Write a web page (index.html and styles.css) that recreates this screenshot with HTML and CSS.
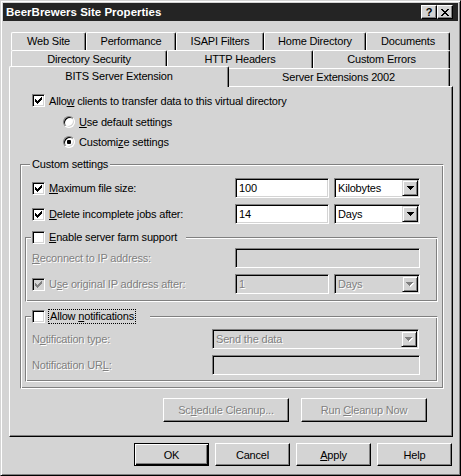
FILE: index.html
```html
<!DOCTYPE html>
<html>
<head>
<meta charset="utf-8">
<title>BeerBrewers Site Properties</title>
<link rel="stylesheet" href="styles.css">
</head>
<body>
<div class="window">
  <div class="titlebar">
    <span class="title">BeerBrewers Site Properties</span>
    <span class="cap cap-help">?</span>
    <span class="cap cap-close"><svg width="8" height="7" viewBox="0 0 8 7"><path d="M0 0h2v1h-2z M6 0h2v1h-2z M1 1h2v1h-2z M5 1h2v1h-2z M2 2h4v1h-4z M3 3h2v1h-2z M2 4h4v1h-4z M1 5h2v1h-2z M5 5h2v1h-2z M0 6h2v1h-2z M6 6h2v1h-2z" fill="#000"/></svg></span>
  </div>
  <div class="body">
    <div class="tabs">
      <div class="tab-row">
        <div class="tab t-web">Web Site</div>
        <div class="tab t-perf">Performance</div>
        <div class="tab t-isapi">ISAPI Filters</div>
        <div class="tab t-home">Home Directory</div>
        <div class="tab t-docs">Documents</div>
      </div>
      <div class="tab-row">
        <div class="tab t-dirsec">Directory Security</div>
        <div class="tab t-http">HTTP Headers</div>
        <div class="tab t-errors">Custom Errors</div>
      </div>
      <div class="tab-row row3">
        <div class="tab sel t-bits">BITS Server Extension</div>
        <div class="tab t-ext">Server Extensions 2002</div>
      </div>
    </div>
    <div class="panel">
      <div class="row r-allow">
        <span class="cb"><svg class="ck" width="7" height="7" viewBox="0 0 7 7"><path d="M6 0h1v1h-1z M5 1h2v1h-2z M0 2h1v1h-1z M4 2h3v1h-3z M0 3h2v1h-2z M3 3h3v1h-3z M0 4h5v1h-5z M1 5h3v1h-3z M2 6h1v1h-1z"/></svg></span>
        <span class="lbl">Allo<u>w</u> clients to transfer data to this virtual directory</span>
      </div>
      <div class="row r-radio1">
        <span class="rb"></span>
        <span class="lbl rlbl"><u>U</u>se default settings</span>
      </div>
      <div class="row r-radio2">
        <span class="rb on"></span>
        <span class="lbl rlbl">Customi<u>z</u>e settings</span>
      </div>

      <fieldset class="group g-custom">
        <legend class="lg lg-custom">Custom settings</legend>
        <div class="frow r-max">
          <div class="col col-wide">
            <span class="cb"><svg class="ck" width="7" height="7" viewBox="0 0 7 7"><path d="M6 0h1v1h-1z M5 1h2v1h-2z M0 2h1v1h-1z M4 2h3v1h-3z M0 3h2v1h-2z M3 3h3v1h-3z M0 4h5v1h-5z M1 5h3v1h-3z M2 6h1v1h-1z"/></svg></span>
            <span class="lbl"><u>M</u>aximum file size:</span>
          </div>
          <div class="edit e-short">100</div>
          <div class="combo c-unit"><span class="cval">Kilobytes</span><span class="cbtn"><svg width="7" height="4" viewBox="0 0 7 4"><path d="M0 0h7v1h-1v1h-1v1h-1v1h-1v-1h-1v-1h-1v-1h-1z" fill="#000"/></svg></span></div>
        </div>
        <div class="frow r-del">
          <div class="col col-wide">
            <span class="cb"><svg class="ck" width="7" height="7" viewBox="0 0 7 7"><path d="M6 0h1v1h-1z M5 1h2v1h-2z M0 2h1v1h-1z M4 2h3v1h-3z M0 3h2v1h-2z M3 3h3v1h-3z M0 4h5v1h-5z M1 5h3v1h-3z M2 6h1v1h-1z"/></svg></span>
            <span class="lbl"><u>D</u>elete incomplete jobs after:</span>
          </div>
          <div class="edit e-short">14</div>
          <div class="combo c-unit"><span class="cval">Days</span><span class="cbtn"><svg width="7" height="4" viewBox="0 0 7 4"><path d="M0 0h7v1h-1v1h-1v1h-1v1h-1v-1h-1v-1h-1v-1h-1z" fill="#000"/></svg></span></div>
        </div>

        <fieldset class="group g-farm">
          <legend class="lg lg-farm"><span class="cb empty"></span><span class="lbl"><u>E</u>nable server farm support</span></legend>
          <div class="frow r-recon">
            <div class="col col-wide"><span class="dis"><u>R</u>econnect to IP address:</span></div>
            <div class="edit e-long disabled"></div>
          </div>
          <div class="frow r-orig">
            <div class="col col-wide">
              <span class="cb disabled"><svg class="ck" width="7" height="7" viewBox="0 0 7 7"><path d="M6 0h1v1h-1z M5 1h2v1h-2z M0 2h1v1h-1z M4 2h3v1h-3z M0 3h2v1h-2z M3 3h3v1h-3z M0 4h5v1h-5z M1 5h3v1h-3z M2 6h1v1h-1z"/></svg></span>
              <span class="lbl dis">U<u>s</u>e original IP address after:</span>
            </div>
            <div class="edit e-short disabled"><span class="dis">1</span></div>
            <div class="combo c-unit disabled"><span class="cval dis">Days</span><span class="cbtn"><svg width="8" height="5" viewBox="0 0 8 5"><path d="M1 1h7v1h-1v1h-1v1h-1v1h-1v-1h-1v-1h-1v-1h-1z" fill="#fff"/><path d="M0 0h7v1h-1v1h-1v1h-1v1h-1v-1h-1v-1h-1v-1h-1z" fill="#808080"/></svg></span></div>
          </div>
        </fieldset>

        <fieldset class="group g-notif">
          <legend class="lg lg-notif"><span class="cb empty"></span><span class="lbl focus">Allow <u>n</u>otifications</span></legend>
          <div class="frow r-ntype">
            <div class="col col-narrow"><span class="dis">N<u>o</u>tification type:</span></div>
            <div class="combo c-ntype disabled"><span class="cval dis">Send the data</span><span class="cbtn"><svg width="8" height="5" viewBox="0 0 8 5"><path d="M1 1h7v1h-1v1h-1v1h-1v1h-1v-1h-1v-1h-1v-1h-1z" fill="#fff"/><path d="M0 0h7v1h-1v1h-1v1h-1v1h-1v-1h-1v-1h-1v-1h-1z" fill="#808080"/></svg></span></div>
          </div>
          <div class="frow r-nurl">
            <div class="col col-narrow"><span class="dis">Notification UR<u>L</u>:</span></div>
            <div class="edit e-url disabled"></div>
          </div>
        </fieldset>
      </fieldset>

      <div class="row r-cleanup">
        <div class="btn btn-clean"><span class="dis">Sc<u>h</u>edule Cleanup...</span></div>
        <div class="btn btn-clean"><span class="dis">Run <u>C</u>leanup Now</span></div>
      </div>
    </div>

    <div class="buttons">
      <div class="btn default">OK</div>
      <div class="btn">Cancel</div>
      <div class="btn"><span><u>A</u>pply</span></div>
      <div class="btn">Help</div>
    </div>
  </div>
</div>
</body>
</html>
```

FILE: styles.css
```css
* {
  box-sizing: border-box;
}

html,
body {
  margin: 0;
  padding: 0;
}

body {
  width: 461px;
  height: 476px;
  overflow: hidden;
  background: #d4d4d4;
  font-family: "Liberation Sans", Arial, sans-serif;
  font-size: 11px;
  letter-spacing: -0.18px;
  color: #000;
}

u {
  text-decoration: underline;
  text-underline-offset: 1px;
}

.window {
  width: 461px;
  height: 476px;
  padding: 2px;
  background: #d4d4d4;
  border: 1px solid;
  border-color: #d4d4d4 #000 #000 #d4d4d4;
  box-shadow: inset 1px 1px 0 #fff, inset -1px -1px 0 #808080;
}

/* title bar */
.titlebar {
  height: 18px;
  background: #242424;
  display: flex;
  align-items: center;
  padding: 0 5px 0 3px;
}

.title {
  flex: 1;
  color: #fff;
  font-weight: bold;
  font-size: 11.5px;
  letter-spacing: 0;
}

.cap {
  width: 16px;
  height: 14px;
  background: #d4d4d4;
  border: 1px solid;
  border-color: #fff #000 #000 #fff;
  box-shadow: inset -1px -1px 0 #808080;
  display: flex;
  align-items: center;
  justify-content: center;
}

.cap-help {
  font-weight: bold;
  font-size: 11px;
  line-height: 12px;
  letter-spacing: 0;
}

.cap-close svg {
  display: block;
}

/* body */
.body {
  padding: 11px 0 0 6px;
}

.tabs {
  width: 444px;
  padding-left: 2px;
}

.tab-row {
  display: flex;
  height: 18px;
}

.row3 {
  align-items: flex-end;
}

.tab {
  flex: none;
  height: 18px;
  background: #d4d4d4;
  border-top: 1px solid #fff;
  border-left: 1px solid #fff;
  border-right: 1px solid #000;
  border-radius: 2px 2px 0 0;
  box-shadow: inset -1px 0 0 #808080;
  display: flex;
  align-items: center;
  justify-content: center;
  padding-bottom: 1px;
  white-space: nowrap;
}

.tab.sel {
  height: 21px;
  margin: 0 -2px -1px -2px;
  position: relative;
  z-index: 1;
  padding-bottom: 3px;
}

.t-web { width: 75px; }
.t-perf { width: 90px; }
.t-isapi { width: 88px; }
.t-home { width: 102px; }
.t-docs { width: 84px; }
.t-dirsec { width: 156px; }
.t-http { width: 146px; }
.t-errors { width: 137px; }
.t-bits { width: 220px; }
.t-ext { width: 223px; }

/* panel */
.panel {
  width: 444px;
  height: 351px;
  border: 1px solid;
  border-color: #fff #000 #000 #fff;
  box-shadow: inset -1px -1px 0 #808080;
  display: flex;
  flex-direction: column;
  align-items: flex-start;
}

.row {
  display: flex;
  align-items: center;
  height: 13px;
}

.r-allow { margin: 7px 0 0 22px; }
.r-radio1 { margin: 8px 0 0 53px; }
.r-radio2 { margin: 7px 0 0 53px; }

.lbl {
  margin-left: 4px;
  white-space: nowrap;
}

.rlbl {
  margin-left: 4px;
}

/* checkbox */
.cb {
  flex: none;
  width: 13px;
  height: 13px;
  background: #fff;
  border: 1px solid;
  border-color: #808080 #fff #fff #808080;
  box-shadow: inset 1px 1px 0 #000, inset -1px -1px 0 #d4d4d4;
  padding: 2px 0 0 2px;
  display: block;
}

.cb .ck {
  display: block;
  fill: #000;
}

.cb.disabled {
  background: #d4d4d4;
}

.cb.disabled .ck {
  fill: #808080;
}

/* radio */
.rb {
  flex: none;
  width: 12px;
  height: 12px;
  border-radius: 50%;
  background: #fff;
  border: 1px solid;
  border-color: #808080 #fff #fff #808080;
  box-shadow: inset 1px 1px 0 #000, inset -1px -1px 0 #d4d4d4;
  display: flex;
  align-items: center;
  justify-content: center;
}

.rb.on::after {
  content: "";
  width: 4px;
  height: 4px;
  border-radius: 1px;
  background: #000;
}

/* group boxes */
.group {
  margin: 0;
  padding: 0;
  min-width: 0;
  border: 1px solid;
  border-color: #808080 #fff #fff #808080;
  box-shadow: inset 1px 1px 0 #fff, inset -1px -1px 0 #808080;
  display: flex;
  flex-direction: column;
  align-items: flex-start;
}

.lg {
  height: 13px;
  line-height: 13px;
  background: #d4d4d4;
  white-space: nowrap;
}

.g-custom {
  width: 424px;
  margin: 10px 0 0 10px;
  padding-bottom: 6px;
}

.lg-custom {
  margin-left: 9px;
  padding: 0 2px;
}

.g-farm {
  width: 413px;
  margin: 7px 0 0 4px;
  padding-bottom: 7px;
}

.lg-farm,
.lg-notif {
  display: flex;
  align-items: center;
  margin-left: 5px;
  padding: 0 0 0 1px;
}

.lg-farm { width: 155px; }
.lg-notif { width: 119px; }

.g-notif {
  width: 413px;
  margin: 8px 0 0 4px;
  padding-bottom: 6px;
}

.frow {
  display: flex;
  align-items: center;
  height: 20px;
}

.r-max { margin: 7px 0 0 11px; }
.r-del { margin: 6px 0 0 11px; }
.r-recon { margin: 4px 0 0 6px; }
.r-orig { margin: 6px 0 0 6px; }
.r-ntype { margin: 6px 0 0 6px; }
.r-nurl { margin: 6px 0 0 6px; }

.col {
  flex: none;
  display: flex;
  align-items: center;
}

.col-wide { width: 203px; }
.col-narrow { width: 180px; }

.dis {
  color: #808080;
  text-shadow: 1px 1px 0 #fff;
}

.focus {
  outline: 1px dotted #000;
  outline-offset: 0;
  padding: 0 1px;
  line-height: 13px;
}

/* edit & combo */
.edit,
.combo {
  flex: none;
  height: 20px;
  background: #fff;
  border: 1px solid;
  border-color: #808080 #fff #fff #808080;
  box-shadow: inset 1px 1px 0 #000, inset -1px -1px 0 #d4d4d4;
  display: flex;
  align-items: center;
  padding: 1px 1px 1px 3px;
  white-space: nowrap;
}

.edit.disabled,
.combo.disabled {
  background: #d4d4d4;
}

.e-short { width: 94px; }
.e-long { width: 185px; }
.e-url { width: 208px; }
.c-unit { width: 86px; margin-left: 5px; }
.c-ntype { width: 207px; }

.combo {
  padding-right: 1px;
}

.cval {
  flex: 1;
}

.cbtn {
  flex: none;
  width: 16px;
  height: 16px;
  border: 1px solid;
  border-color: #d4d4d4 #000 #000 #d4d4d4;
  box-shadow: inset 1px 1px 0 #fff, inset -1px -1px 0 #808080;
  background: #d4d4d4;
  display: flex;
  align-items: center;
  justify-content: center;
}

.cbtn svg {
  display: block;
}

/* buttons */
.btn {
  flex: none;
  width: 75px;
  height: 23px;
  border: 1px solid;
  border-color: #fff #000 #000 #fff;
  box-shadow: inset -1px -1px 0 #808080;
  display: flex;
  align-items: center;
  justify-content: center;
  white-space: nowrap;
}

.btn.default {
  border-color: #000;
  box-shadow: inset 1px 1px 0 #fff, inset -1px -1px 0 #000, inset -2px -2px 0 #808080;
}

.r-cleanup {
  height: 24px;
  margin: 9px 0 0 153px;
  gap: 12px;
}

.btn-clean {
  width: 126px;
  height: 24px;
}

.buttons {
  width: 444px;
  display: flex;
  justify-content: flex-end;
  gap: 6px;
  margin-top: 6px;
  padding-right: 1px;
}
```
